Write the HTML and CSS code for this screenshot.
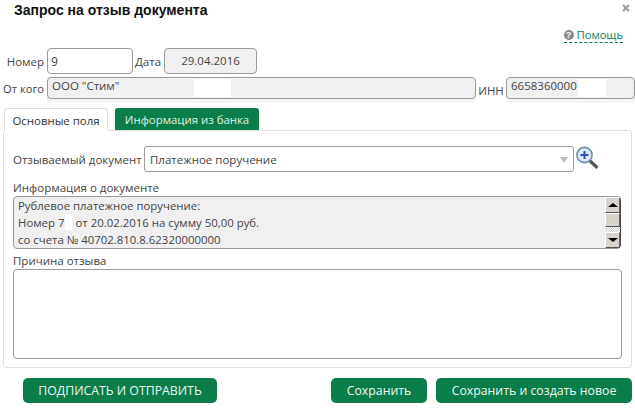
FILE: index.html
```html
<!DOCTYPE html>
<html lang="ru">
<head>
<meta charset="utf-8">
<title>Запрос на отзыв документа</title>
<link rel="stylesheet" href="styles.css">
</head>
<body>
<div class="dialog">
  <header class="head">
    <h1 class="title">Запрос на отзыв документа</h1>
    <svg class="close" width="8" height="8" viewBox="0 0 8 8"><path d="M1 1L7 7M7 1L1 7" stroke="#999" stroke-width="2"/></svg>
  </header>
  <div class="help-row">
    <a class="help"><span class="help-icon">?</span><span class="help-text">Помощь</span></a>
  </div>
  <div class="row row-one">
    <label class="lbl lbl-first">Номер</label>
    <div class="field number">9</div>
    <label class="lbl lbl-date">Дата</label>
    <div class="field date">29.04.2016</div>
  </div>
  <div class="row row-two">
    <label class="lbl lbl-first">От кого</label>
    <div class="field from">ООО "Стим"<span class="mask mask-from"></span></div>
    <label class="lbl lbl-inn">ИНН</label>
    <div class="field inn">6658360000<span class="mask mask-inn"></span></div>
  </div>
  <div class="tabs">
    <div class="tab active">Основные поля</div>
    <div class="tab green">Информация из банка</div>
  </div>
  <section class="panel">
    <div class="doc-row">
      <label class="lbl doc-lbl">Отзываемый документ</label>
      <div class="select">Платежное поручение<span class="caret"></span></div>
      <svg class="zoom" width="24" height="24" viewBox="0 0 24 24">
        <path d="M14 14 L21.5 21" stroke="#555" stroke-width="3.2" stroke-linecap="round"/>
        <circle cx="9.5" cy="9" r="7.6" fill="#dfeaf6" stroke="#6f8fae" stroke-width="1.6"/>
        <path d="M5.5 9h8M9.500 5v8" stroke="#2a55b8" stroke-width="2"/>
      </svg>
    </div>
    <div class="cap cap-info">Информация о документе</div>
    <div class="info">
      <div class="info-text">
        <div>Рублевое платежное поручение:</div>
        <div>Номер 7<span class="mask mask-num"></span>от 20.02.2016 на сумму 50,00 руб.</div>
        <div>со счета № 40702.810.8.62320000000</div>
      </div>
      <div class="scroll">
        <span class="sbtn"><i class="arrow up"></i></span>
        <span class="sthumb"></span>
        <span class="strack"></span>
        <span class="sbtn"><i class="arrow down"></i></span>
      </div>
    </div>
    <div class="cap cap-reason">Причина отзыва</div>
    <div class="reason"></div>
  </section>
  <footer class="actions">
    <button class="btn send">ПОДПИСАТЬ И ОТПРАВИТЬ</button>
    <button class="btn save">Сохранить</button>
    <button class="btn save-new">Сохранить и создать новое</button>
  </footer>
</div>
</body>
</html>
```
FILE: styles.css
```css
* { box-sizing: border-box; }
html, body { margin: 0; padding: 0; background: #fff; }
body { width: 635px; height: 408px; overflow: hidden; font-family: "Open Sans", "Noto Sans", sans-serif; font-size: 11.5px; color: #444; }
.dialog { display: flex; flex-direction: column; height: 408px; }
.head { display: flex; justify-content: space-between; height: 18px; padding: 1px 5px 0 14px; }
.title { margin: 0; font: bold 14px/18px "Liberation Sans", sans-serif; color: #111; }
.close { margin-top: 3px; }
.help-row { display: flex; justify-content: flex-end; height: 30px; padding: 9px 12px 0 0; }
.help { display: flex; align-items: center; gap: 3px; height: 16px; border-bottom: 1px dashed #0a7d4a; }
.help-icon { width: 10px; height: 10px; border-radius: 50%; background: #888; color: #fff; font: bold 9px/10px "Liberation Sans", sans-serif; text-align: center; }
.help-text { color: #0a7d6a; font-size: 11.2px; line-height: 14px; }
.row { display: flex; align-items: center; }
.row-one { height: 26px; }
.row-two { height: 22px; margin-top: 3px; }
.lbl { font-size: 11.5px; color: #444; white-space: nowrap; }
.lbl-first { width: 44px; text-align: right; margin-right: 3px; }
.row-two .lbl-first { font-size: 11.2px; }
.field { position: relative; border: 1px solid #999; border-radius: 4px; height: 100%; font-size: 11.5px; color: #444; }
.number { width: 86px; padding: 4px 3px; background: #fff; font-size: 12px; }
.lbl-date { width: 26px; margin: 0 3px 0 2px; }
.date { width: 93px; background: #f0f0f0; text-align: center; line-height: 23px; }
.from { width: 429px; background: #f0f0f0; padding: 0 4px; box-shadow: 0 4px 0 #f4f4f4; }
.lbl-inn { width: 30px; text-align: center; padding-top: 4px; }
.inn { width: 129px; background: #f0f0f0; padding: 0 4px; box-shadow: 0 4px 0 #f4f4f4; }
.mask { display: inline-block; background: #fff; }
.mask-from { position: absolute; left: 146px; top: 1px; width: 37px; height: 18px; }
.mask-inn { position: absolute; left: 71px; top: 1px; width: 28px; height: 18px; }
.mask-num { width: 7px; height: 16px; margin: 0 3px 0 1px; vertical-align: top; }
.tabs { display: flex; gap: 7px; height: 23px; margin-top: 9px; padding-left: 4px; }
.tab { font-size: 11.4px; line-height: 24px; text-align: center; border-radius: 3px 3px 0 0; }
.active { width: 104px; height: 23px; background: #fff; border: 1px solid #e0e0e0; border-bottom: 0; color: #333; position: relative; z-index: 1; }
.green { width: 144px; height: 22px; background: #0a7d4a; color: #dff3e8; }
.panel { width: 629px; height: 238px; margin: -1px 0 0 3px; padding: 15px 9px 0 9px; border: 1px solid #e0e0e0; border-radius: 0 3px 3px 3px; }
.doc-row { display: flex; align-items: flex-start; height: 26px; }
.doc-lbl { width: 131px; line-height: 27px; }
.select { position: relative; width: 430px; height: 26px; border: 1px solid #999; border-radius: 3px; padding-left: 5px; font-size: 11.5px; line-height: 25px; color: #444; }
.caret { position: absolute; right: 5px; top: 10px; border: 4px solid transparent; border-top: 6px solid #bbb; border-bottom: 0; }
.zoom { margin-left: 1px; }
.cap { font-size: 11.5px; line-height: 14px; color: #444; }
.cap-info { margin-top: 9px; }
.info { display: flex; justify-content: space-between; width: 608px; height: 53px; margin-top: 1px; background: #f0f0f0; border: 1px solid #999; border-radius: 4px; }
.info-text { padding: 0 4px; font-size: 11.4px; line-height: 17px; color: #444; }
.scroll { display: flex; flex-direction: column; width: 16px; margin: 0 -1px 0 0; border-right: 1px solid #444; border-radius: 0 4px 4px 0; }
.sbtn, .sthumb { display: flex; flex: none; align-items: center; justify-content: center; background: #d8d4cc; border-right: 1px solid #666; border-bottom: 1px solid #555; border-top: 1px solid #fff; border-left: 1px solid #fff; }
.sbtn { height: 16px; }
.sthumb { height: 14px; }
.strack { flex: 1; background: repeating-conic-gradient(#ccc 0 25%, #fff 0 50%) 0 0 / 2px 2px; }
.arrow { width: 0; height: 0; border: 5px solid transparent; }
.up { border-top: 0; border-bottom: 4px solid #000; }
.down { border-bottom: 0; border-top: 4px solid #000; }
.cap-reason { margin-top: 5px; }
.reason { width: 609px; height: 90px; margin-top: 1px; border: 1px solid #999; border-radius: 4px; }
.actions { display: flex; margin-top: 10px; padding-left: 23px; }
.btn { height: 25px; border: 0; padding: 0; background: #0a7d4a; color: #f0f8f2; border-radius: 5px; font-family: "Open Sans", "Noto Sans", sans-serif; font-size: 12.3px; }
.send { width: 194px; }
.save { width: 96px; margin-left: 114px; }
.save-new { width: 196px; margin-left: 9px; }
```
